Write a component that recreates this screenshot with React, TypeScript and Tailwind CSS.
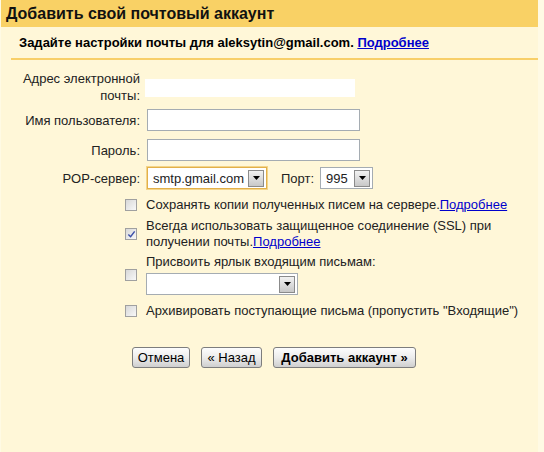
import { ReactNode } from "react";

function Checkbox({ checked = false }: { checked?: boolean }) {
  return (
    <span className="relative block h-[12px] w-[12px] shrink-0 border border-[#a0a0a0] bg-gradient-to-br from-[#d8d8d8] to-[#f8f8f8]">
      {checked && (
        <svg viewBox="0 0 10 10" className="absolute left-[1px] top-[1px] h-[9px] w-[9px]">
          <path d="M1.5 5 L4 7.5 L8.5 1.5" fill="none" stroke="#3b4fa8" strokeWidth="1.6" />
        </svg>
      )}
    </span>
  );
}

function Select({
  value,
  width,
  focused = false,
}: {
  value: string;
  width: string;
  focused?: boolean;
}) {
  return (
    <div
      className={`flex h-[22px] items-center justify-between border bg-white pl-[5px] pr-[2px] ${width} ${
        focused ? "border-[#e2b04a] shadow-[0_0_0_1px_#f4d58a]" : "border-[#a5acb2]"
      }`}
    >
      <span className="leading-none">{value}</span>
      <span className="flex h-[17px] w-[16px] items-center justify-center border border-[#8b8b8b] bg-gradient-to-b from-[#f2f2f2] to-[#c8c8c8]">
        <svg viewBox="0 0 7 4" className="h-[4px] w-[7px]">
          <path d="M0 0 H7 L3.5 4 Z" fill="#000" />
        </svg>
      </span>
    </div>
  );
}

function Link({ children, bold = false }: { children: ReactNode; bold?: boolean }) {
  return (
    <a href="#" className={`text-[#0000cc] underline ${bold ? "font-bold" : ""}`}>
      {children}
    </a>
  );
}

function Button({ children, bold = false, w }: { children: ReactNode; bold?: boolean; w: string }) {
  return (
    <button
      type="button"
      className={`h-[21px] rounded-[3px] border border-[#7d7d7d] bg-gradient-to-b from-[#fdfdfd] via-[#ececec] to-[#cfcfcf] text-[13px] leading-none text-black ${w} ${
        bold ? "font-bold" : ""
      }`}
    >
      {children}
    </button>
  );
}

export default function App() {
  return (
    <div className="h-[452px] w-[544px] overflow-hidden bg-[#fffae4] font-['Liberation_Sans',Arial,sans-serif] text-[13px] text-black">
      <div className="ml-px h-full w-[537px] bg-[#fff7d8]">
        <div className="h-[27px] bg-[#f9d165] pl-[5px] text-[16px] font-bold leading-[27px] text-[#111]">
          Добавить свой почтовый аккаунт
        </div>

        <div className="flex h-[31px] items-center pl-[18px] font-bold">
          Задайте настройки почты для aleksytin@gmail.com.&nbsp;
          <Link bold>Подробнее</Link>
        </div>
        <div className="ml-[10px] h-[2px] bg-[#f8cf68]" />

        <div className="pt-[10px] leading-[17px] text-[#222]">
          <div className="grid grid-cols-[140px_1fr] gap-x-[6px]">
            <div className="pr-px text-right leading-[17px]">
              Адрес электронной
              <br />
              почты:
            </div>
            <div className="ml-[-2px] mt-[9px] h-[18px] w-[210px] bg-white" />
          </div>

          <div className="mt-[5px] grid grid-cols-[140px_1fr] items-center gap-x-[6px]">
            <div className="pr-px text-right">Имя пользователя:</div>
            <div className="h-[22px] w-[213px] border border-[#a5acb2] bg-white" />
          </div>

          <div className="mt-[8px] grid grid-cols-[140px_1fr] items-center gap-x-[6px]">
            <div className="pr-px text-right">Пароль:</div>
            <div className="h-[22px] w-[213px] border border-[#a5acb2] bg-white" />
          </div>

          <div className="mt-[6px] grid grid-cols-[140px_1fr] items-center gap-x-[6px]">
            <div className="pr-px text-right">POP-сервер:</div>
            <div className="flex items-center">
              <Select value="smtp.gmail.com" width="w-[120px]" focused />
              <span className="ml-[14px] mr-[6px]">Порт:</span>
              <Select value="995" width="w-[53px]" />
            </div>
          </div>

          <div className="pl-[124px] leading-[16px]">
            <div className="mt-[8px] flex items-start gap-[9px]">
              <span className="mt-[2px]">
                <Checkbox />
              </span>
              <span>
                Сохранять копии полученных писем на сервере.<Link>Подробнее</Link>
              </span>
            </div>

            <div className="mt-[5px] flex items-center gap-[9px]">
              <Checkbox checked />
              <span>
                Всегда использовать защищенное соединение (SSL) при
                <br />
                получении почты.<Link>Подробнее</Link>
              </span>
            </div>

            <div className="mt-[4px] flex items-center gap-[9px]">
              <Checkbox />
              <div>
                <div>Присвоить ярлык входящим письмам:</div>
                <div className="mt-[3px]">
                  <Select value="" width="w-[152px] h-[20px]" />
                </div>
              </div>
            </div>

            <div className="mt-[8px] flex items-center gap-[9px]">
              <Checkbox />
              <span>Архивировать поступающие письма (пропустить "Входящие")</span>
            </div>
          </div>

          <div className="mt-[28px] flex gap-[11px] pl-[131px]">
            <Button w="w-[58px]">Отмена</Button>
            <Button w="w-[61px]">« Назад</Button>
            <Button w="w-[143px]" bold>
              Добавить аккаунт »
            </Button>
          </div>
        </div>
      </div>
    </div>
  );
}
